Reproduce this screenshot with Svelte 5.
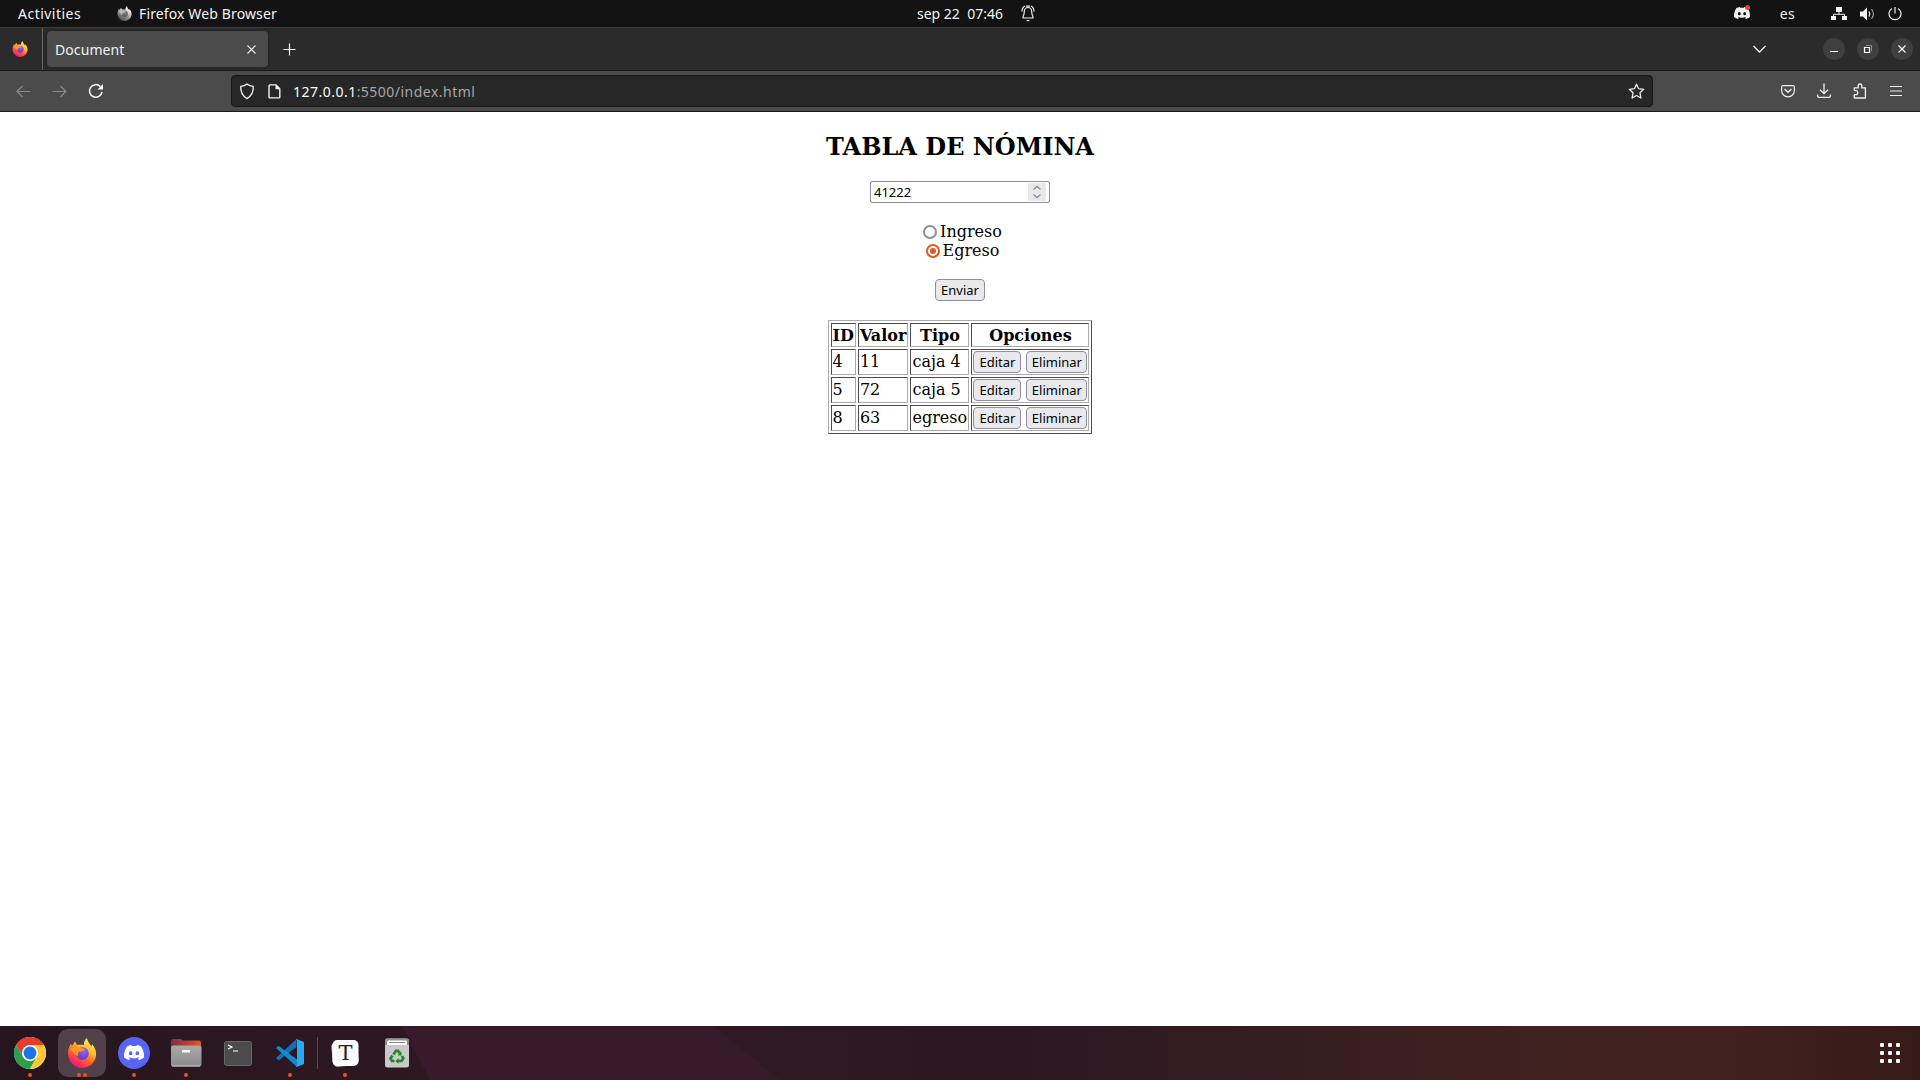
<script lang="ts">
  const rows = [
    { id: 4, value: 11, type: 'caja 4' },
    { id: 5, value: 72, type: 'caja 5' },
    { id: 8, value: 63, type: 'egreso' }
  ];
  const dots = [0, 1, 2].flatMap((r) => [0, 1, 2].map((c) => ({ x: c * 8, y: r * 8 })));
</script>

{#snippet firefox(size: number, mono: boolean)}
  <svg class:mono width={size} height={size} viewBox="0 0 30 30">
    <defs>
      <linearGradient id="fx" x1="0.85" y1="0.05" x2="0.3" y2="1">
        <stop offset="0" stop-color="#fff44f" /><stop offset=".35" stop-color="#ffbd2f" />
        <stop offset=".6" stop-color="#ff6a2b" /><stop offset=".85" stop-color="#fb2d5b" /><stop offset="1" stop-color="#e31587" />
      </linearGradient>
      <radialGradient id="fxp" cx=".6" cy=".3" r=".8">
        <stop offset="0" stop-color="#9a5cf5" /><stop offset="1" stop-color="#5a3cc0" />
      </radialGradient>
    </defs>
    <path fill="url(#fx)" d="M1 15C1 11 2.500 8 4 5.500L5 8 8 3.500 10 7C13 6.500 16 7 17 7C16.500 4 18 1.500 20 0C20.500 4 23 6 24.500 8.500L25 6C28.500 10 29.500 14 29 18C28 25 22 30 15 30C7 30 1 23 1 15Z" />
    <circle cx="15.500" cy="15.500" r="6.300" fill="url(#fxp)" />
    <path fill="#ff9820" d="M3 11C6 8 10 8 12 9.500L18 11C17 13 15 13.500 12.500 13.500C11 15 10.500 16 11 18C8 17 6 14 3 11Z" />
  </svg>
{/snippet}

{#snippet discord(w: number, color: string)}
  <svg width={w} height={w * 0.76} viewBox="0 0 24 18.250">
    <path fill={color} fill-rule="evenodd" d="M20.300 1.500C18.800.8 17.100.3 15.400 0L14.700 1.300C12.900 1 11.100 1 9.300 1.300L8.600 0C6.900.3 5.200.8 3.700 1.500C.6 6.100-.3 10.600.1 15C2 16.500 4 17.600 6.100 18.200L7.400 16.100L5.500 15.200L6 14.800C9.900 16.600 14.100 16.600 18 14.800L18.500 15.200L16.600 16.100L17.900 18.200C20 17.600 22 16.500 23.900 15C24.400 9.900 23.100 5.500 20.300 1.500ZM8 12.400A2.200 2.400 0 1 1 8 7.600A2.200 2.400 0 0 1 8 12.400ZM16 12.400A2.200 2.400 0 1 1 16 7.600A2.200 2.400 0 0 1 16 12.400Z" />
  </svg>
{/snippet}

<div class="screen">
  <header class="topbar">
    <span class="activities">Activities</span>
    <span class="app">{@render firefox(15, true)}<span class="appname">Firefox Web Browser</span></span>
    <span class="clock"><span class="time">sep 22&nbsp; 07:46</span>
      <svg width="14" height="17" viewBox="0 0 14 17" fill="none" stroke="#eee" stroke-width="1.200">
        <path d="M2 13V12C3 10 3.300 9 3.300 6.500A3.700 4 0 0 1 10.700 6.500C10.700 9 11 10 12 12V13Z" />
        <path d="M1 6.500C1 4 2 2 4 1M13 6.500C13 4 12 2 10 1M5 1.200H9" /><path d="M5 15H9L7 16.500Z" fill="#eee" stroke="none" />
      </svg>
    </span>
    <span class="tray">
      <span class="tray-discord">{@render discord(16, '#f2f2f2')}<i></i></span>
      <span class="lang">es</span>
      <svg class="net" width="16" height="14" viewBox="0 0 16 14"><path fill="#f2f2f2" d="M5 0h6v5H5zM0 9h5v4H0zM11 9h5v4h-5z" /><path d="M8 4V7M2.500 10V7.300H13.500V10" fill="none" stroke="#f2f2f2" /></svg>
      <svg class="vol" width="15" height="14" viewBox="0 0 15 14"><path fill="#f2f2f2" d="M0 4.500H3L7 .5V13.500L3 9.500H0Z" /><path d="M9 4.500Q10.600 7 9 9.500" fill="none" stroke="#eee" stroke-width="1.300" /><path d="M11.500 2.200Q15.300 7 11.500 11.800" fill="none" stroke="#999" stroke-width="1.200" /></svg>
      <svg class="power" width="14" height="14" viewBox="0 0 14 14" fill="none" stroke="#eee" stroke-width="1.200"><path d="M7 0V6.500M4 1.500A6 6 0 1 0 10 1.500" /></svg>
    </span>
  </header>

  <div class="tabs">
    <div class="view">{@render firefox(16, false)}</div>
    <div class="tab"><span class="tabname">Document</span>
      <svg width="9" height="9" viewBox="0 0 9 9" stroke="#e8e8e8" stroke-width="1.100"><path d="M.5.5l8 8M8.500.5l-8 8" /></svg>
    </div>
    <svg class="plus" width="13" height="13" viewBox="0 0 13 13" stroke="#fff" stroke-width="1.200"><path d="M.5 6.500H12.500M6.500 .5V12.500" /></svg>
    <svg class="chev" width="13" height="8" viewBox="0 0 13 8" fill="none" stroke="#eee" stroke-width="1.300"><path d="M.5 1L6.500 7L12.500 1" /></svg>
    <div class="wins">
      <span><svg width="22" height="22" stroke="#fff"><path d="M7 13.500H15" /></svg></span>
      <span><svg width="22" height="22" fill="none"><path d="M9 7.500H14.500V13" stroke="#8c8c8c" /><path d="M7.500 9.500H12.500V14.500H7.500Z" stroke="#fff" stroke-width="1.200" /></svg></span>
      <span><svg width="22" height="22" stroke="#fff" stroke-width="1.200"><path d="M7.500 7.500L14.500 14.500M14.500 7.500L7.500 14.500" /></svg></span>
    </div>
  </div>

  <div class="toolbar">
    <svg class="back" width="15" height="13" viewBox="0 0 15 13" fill="none" stroke="#898989" stroke-width="1.200"><path d="M14.500 6.500H1M6.500 1L1 6.500L6.500 12" /></svg>
    <svg class="fwd" width="15" height="13" viewBox="0 0 15 13" fill="none" stroke="#898989" stroke-width="1.200"><path d="M.5 6.500H14M8.500 1L14 6.500L8.500 12" /></svg>
    <svg class="reload" width="16" height="16" viewBox="0 0 16 16" fill="none" stroke="#fbfbfb" stroke-width="1.500"><path d="M12.300 3.500A6.300 6.300 0 1 0 14 9" /><path d="M15 1V6.500H9.500Z" fill="#fbfbfb" stroke="none" /></svg>
    <div class="url">
      <svg class="shield" width="16" height="17" viewBox="0 0 16 17" fill="none" stroke="#ededed" stroke-width="1.400"><path d="M8 1Q10.500 3.200 14.200 3.400Q14.800 11.500 8 15.600Q1.200 11.500 1.800 3.400Q5.500 3.200 8 1Z" stroke-linejoin="round" /></svg>
      <svg class="page" width="13" height="15" viewBox="0 0 13 15" fill="none" stroke="#f2f2f2" stroke-width="1.400"><path d="M2 .9H8L11.800 4.700V13Q11.800 13.900 10.800 13.900H2Q1 13.900 1 13V1.900Q1 .9 2 .9Z" /><path d="M7.500 1V5.200H12Z" fill="#f2f2f2" stroke="none" /></svg>
      <span class="addr"><b>127.0.0.1</b>:5500/index.html</span>
      <svg class="star" width="17" height="17" viewBox="0 0 17 17" fill="none" stroke="#ededed" stroke-width="1.300" stroke-linejoin="round"><path d="M8.500 1.200L10.600 5.700L15.700 6.300L12 9.800L12.900 15L8.500 12.500L4.100 15L5 9.800L1.300 6.300L6.400 5.700Z" /></svg>
    </div>
    <div class="tools">
      <svg width="16" height="16" viewBox="0 0 16 16" fill="none" stroke="#f2f2f2" stroke-width="1.200"><path d="M3 2.600H13Q14.400 2.600 14.400 4V7.500A6.400 6.300 0 0 1 1.600 7.500V4Q1.600 2.600 3 2.600Z" /><path d="M4.500 6L8 9.200L11.500 6" stroke-width="1.400" /></svg>
      <svg width="16" height="16" viewBox="0 0 16 16" fill="none" stroke="#f2f2f2" stroke-width="1.300"><path d="M8 .5V10.500M4 6.700L8 10.700L12 6.700M1.600 11.500V13Q1.600 14.400 3 14.400H13Q14.400 14.400 14.400 13V11.500" /></svg>
      <svg width="16" height="16" viewBox="0 0 16 16" fill="none" stroke="#f2f2f2" stroke-width="1.300"><path d="M2.300 7.500V4.800H6.200V2.700Q6.200 1 8 1T9.800 2.700V4.800H13.400V15H2.300V11.600H4Q5.800 11.600 5.800 9.700T4 7.700H2.300" /></svg>
      <svg width="16" height="16" viewBox="0 0 16 16" stroke="#f2f2f2" stroke-width="1.200"><path d="M2 3.500H14M2 8H14M2 12.500H14" /></svg>
    </div>
  </div>

  <main>
    <h2>TABLA DE NÓMINA</h2>
    <div class="number"><span>41222</span>
      <svg width="18" height="18" viewBox="0 0 18 18" fill="none" stroke="#8f8f9d" stroke-width="1.400"><path d="M5.500 6.500L9 3.500L12.500 6.500M5.500 11.500L9 14.500L12.500 11.500" /></svg>
    </div>
    <div class="radios">
      <label><span class="radio"></span>Ingreso</label>
      <label><span class="radio on"></span>Egreso</label>
    </div>
    <button class="send">Enviar</button>
    <table>
      <thead><tr><th class="c1">ID</th><th class="c2">Valor</th><th class="c3">Tipo</th><th class="c4">Opciones</th></tr></thead>
      <tbody>
        {#each rows as row (row.id)}
          <tr><td>{row.id}</td><td>{row.value}</td><td>{row.type}</td>
            <td><div class="ops"><button class="edit">Editar</button><button class="del">Eliminar</button></div></td></tr>
        {/each}
      </tbody>
    </table>
  </main>

  <footer class="dock">
    <div class="tile">
      <svg width="32" height="32" viewBox="0 0 32 32">
        <circle cx="16" cy="16" r="16" fill="#fff" />
        <path d="M16 16V8H29.900A16 16 0 0 0 2.100 8L9.100 20Z" fill="#e33b2e" />
        <path d="M2.100 8A16 16 0 0 0 16 32L22.900 20L9.100 20Z" fill="#2c9f4b" />
        <path d="M16 32A16 16 0 0 0 29.900 8H16L22.900 20Z" fill="#fcc934" />
        <circle cx="16" cy="16" r="8" fill="#fff" /><circle cx="16" cy="16" r="6.400" fill="#1a73e8" />
      </svg><span class="marks"><i></i></span>
    </div>
    <div class="tile active">{@render firefox(30, false)}<span class="marks"><i></i><i></i></span></div>
    <div class="tile"><span class="disc">{@render discord(20, '#fff')}</span><span class="marks"><i></i></span></div>
    <div class="tile">
      <svg width="32" height="30" viewBox="0 0 32 30">
        <defs><linearGradient id="fo"><stop offset="0" stop-color="#7d2c4d" /><stop offset="1" stop-color="#e95420" /></linearGradient><linearGradient id="fg" x2="0" y2="1"><stop offset="0" stop-color="#a9a9a9" /><stop offset="1" stop-color="#8b8b8b" /></linearGradient></defs>
        <path d="M1 10V3Q1 1 3 1H10Q12 1 13 2.500H29Q31 2.500 31 4.500V10Z" fill="url(#fo)" />
        <rect x="1" y="7.500" width="30.500" height="21" rx="2" fill="url(#fg)" /><path d="M2 28H30" stroke="#ccc" /><rect x="12" y="12" width="8" height="2.500" rx=".5" fill="#fff" />
      </svg><span class="marks"><i></i></span>
    </div>
    <div class="tile">
      <svg width="28" height="25" viewBox="0 0 28 25"><rect x=".5" y=".5" width="27" height="24" rx="2" fill="#4b4b4b" stroke="#686868" /><path d="M4 4L8 6L4 8M9 10H14" fill="none" stroke="#fff" stroke-width="1.200" /></svg>
    </div>
    <div class="tile">
      <svg width="28" height="28" viewBox="0 0 28 28"><path d="M0 19L20.500 0V8L2.500 21.500Z" fill="#0e72b5" /><path d="M0 9L2.500 6.700L21 20.500V28Z" fill="#1189cf" /><path d="M20.500 0L28 3V25L20.500 28L19.500 27C20.500 27.500 21 27 21 26V2C21 1 20.500.5 19.500 1Z" fill="#29a8f2" /></svg><span class="marks"><i></i></span>
    </div>
    <span class="divider"></span>
    <div class="tile">
      <svg width="28" height="29" viewBox="0 0 28 29"><rect x="1" y="2" width="26" height="25" rx="5" fill="#d5d5d5" transform="rotate(-5 14 14)" /><rect x="1.500" y="1" width="26" height="26" rx="5" fill="#fdfdfd" /><path d="M5 9H24M5 13H24M5 17H24M5 21H24" stroke="#eee" /><text x="14.500" y="20.500" text-anchor="middle">T</text></svg><span class="marks"><i></i></span>
    </div>
    <div class="tile">
      <svg width="26" height="30" viewBox="0 0 26 30"><rect x="1" y=".5" width="24" height="29" rx="2.500" fill="#c9c9c9" /><path d="M1 7V3Q1 .5 3.500.5H22.500Q25 .5 25 3V7Z" fill="#929292" /><path d="M3 7V4Q3 2.500 4.500 2.500H21.500Q23 2.500 23 4V7Z" fill="#fff" /><path d="M5 4.500H21" stroke="#888" /><g fill="none" stroke="#23852a" stroke-width="2.700"><path d="M9.500 16.500L12 12.800H14L16 15.500M18 18L19.300 20.500L17.500 23H14M10.500 23H8L6.500 20.500L8.500 17.500" /></g><path d="M17.500 13.500V17.500H13.500ZM14.500 20L11.500 23L14.500 26Z" fill="#23852a" /></svg>
    </div>
    <svg class="grid" width="22" height="22" viewBox="-1 -1 22 22" fill="#f6f6f6">
      {#each dots as d}<rect x={d.x} y={d.y} width="4" height="4" rx="1" />{/each}
    </svg>
  </footer>
</div>

<style>
  :global(body) { margin: 0; background: #fff; }
  * { box-sizing: border-box; }
  svg { display: block; flex: none; }
  .screen { width: 1920px; height: 1080px; display: flex; flex-direction: column; overflow: hidden; font-family: 'Noto Sans', sans-serif; font-size: 14px; color: #f2f2f2; white-space: nowrap; }
  .mono { filter: grayscale(1) brightness(1.1); }
  .topbar { height: 27px; flex: none; background: #131313; display: grid; grid-template-columns: 117px 800px 1fr auto; align-items: center; line-height: 27px; }
  .activities { padding-left: 18px; letter-spacing: .48px; }
  .app { display: flex; align-items: center; gap: 7px; }
  .appname { letter-spacing: .13px; }
  .clock { display: flex; align-items: center; gap: 18px; }
  .tray { display: flex; align-items: center; padding-right: 18px; }
  .tray-discord { position: relative; margin-right: 30px; }
  .tray-discord i { position: absolute; right: 0; top: -2px; width: 5px; height: 5px; border-radius: 50%; background: #ed4245; }
  .lang { margin-right: 36px; letter-spacing: .3px; }
  .net { margin-right: 13px; }
  .vol { margin-right: 13px; }
  .tabs { height: 44px; flex: none; background: #2b2b2b; border-top: 1px solid #3b3b3b; border-bottom: 1px solid #191919; display: flex; align-items: center; }
  .view { width: 43px; height: 100%; border-right: 1px solid #666; padding: 13px 0 0 12px; }
  .tab { width: 221px; height: 36px; margin-left: 4px; background: #4b4b4b; border-radius: 4px; display: flex; align-items: center; justify-content: space-between; padding: 0 12px 0 8px; box-shadow: 0 0 3px #1a1a1a; }
  .tabname { letter-spacing: .08px; }
  .plus { margin-left: 15px; }
  .chev { margin-left: auto; margin-right: 57px; }
  .wins { display: flex; gap: 12px; padding-right: 7px; }
  .wins span { width: 22px; height: 22px; border-radius: 50%; background: #3f3f3f; }
  .toolbar { height: 41px; flex: none; background: #4b4b4b; border-bottom: 1px solid #1a1a1a; display: flex; align-items: center; }
  .back { margin-left: 16px; }
  .fwd { margin-left: 21px; }
  .reload { margin-left: 21px; }
  .url { width: 1422px; height: 32px; margin-left: 127px; background: #272727; border: 1px solid #161616; border-radius: 4px; display: flex; align-items: center; padding: 0 7px; }
  .page { margin-left: 13px; }
  .addr { margin-left: 12px; color: #a6a6a6; letter-spacing: .48px; }
  .addr b { font-weight: 400; color: #fbfbfb; }
  .star { margin-left: auto; }
  .tools { display: flex; gap: 20px; margin-left: 127px; }
  main { flex: 1; background: #fff; color: #000; display: flex; flex-direction: column; align-items: center; font-family: 'DejaVu Serif', serif; font-size: 16px; }
  h2 { margin: 21px 0 20px; font-size: 24px; line-height: 28px; }
  .number { width: 180px; height: 22px; border: 1px solid #8f8f9d; border-radius: 2px; display: flex; align-items: center; justify-content: space-between; padding: 0 3px; font: 13px 'Noto Sans', sans-serif; }
  .number svg { background: #e9e9ed; }
  .radios { margin-top: 19px; padding-left: 5px; display: flex; flex-direction: column; align-items: center; line-height: 19px; }
  label { display: flex; align-items: center; gap: 3px; }
  .radio { width: 14px; height: 14px; border-radius: 50%; border: 2px solid #8f8f9d; }
  .on { border-color: #e95420; background: #e95420; background-clip: content-box; padding: 2px; }
  button { height: 22px; padding: 0; border: 1px solid #8f8f9d; border-radius: 4px; background: #e9e9ed; color: #000; font: 13px 'Noto Sans', sans-serif; line-height: 20px; }
  .send { width: 50px; margin-top: 19px; }
  table { margin-top: 19px; border: 1px solid; border-color: #aaa #4c4c4c #4c4c4c #aaa; border-spacing: 2px; border-collapse: separate; }
  th, td { border: 1px solid; border-color: #4c4c4c #aaa #aaa #4c4c4c; padding: 1px; height: 26px; line-height: 20px; text-align: left; }
  th { text-align: center; height: 24px; padding: 2px 1px 0; }
  .c1 { width: 25px; } .c2 { width: 50px; } .c3 { width: 59px; } .c4 { width: 118px; }
  .ops { display: flex; gap: 5px; }
  .edit { width: 48px; }
  .del { width: 61px; }
  .dock { position: relative; height: 54px; flex: none; display: flex; align-items: center; gap: 4px; padding: 0 19px 0 6px; background: linear-gradient(90deg, #26151e 0, #2d1822 350px, #301925 700px, #2b1823 1000px, #3e211e 1500px, #43211e 1700px, #351b17 1920px); }
  /* Lighter facet of the wallpaper showing through the dock */
  .dock::before { content: ''; position: absolute; inset: 0; background: #371b2a; clip-path: polygon(402px 0, 714px 0, 780px 54px, 430px 54px); }
  .tile { position: relative; width: 48px; height: 48px; border-radius: 10px; display: grid; place-items: center; }
  .active { background: #50404a; }
  .disc { width: 32px; height: 32px; border-radius: 50%; background: #5865f2; display: grid; place-items: center; }
  .marks { position: absolute; left: 0; right: 0; bottom: 0; display: flex; justify-content: center; gap: 2px; }
  .marks i { width: 4px; height: 4px; border-radius: 50%; background: #e95420; }
  .divider { width: 1px; height: 32px; background: #5a4a53; margin: 0 -1px; }
  .tile text { font: 21px 'DejaVu Serif', serif; fill: #222; }
  .grid { margin-left: auto; }
</style>
